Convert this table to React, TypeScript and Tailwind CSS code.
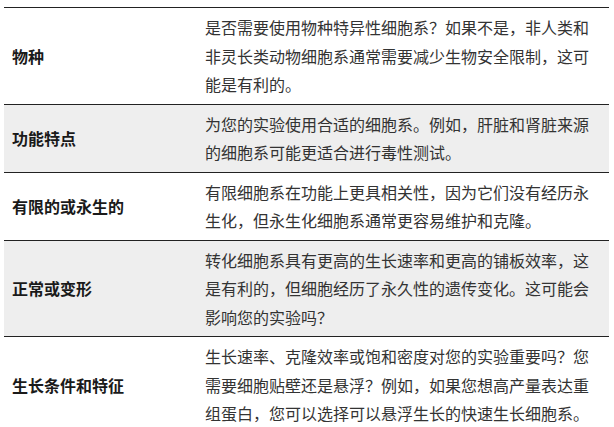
const rows = [
  {
    label: "物种",
    text: "是否需要使用物种特异性细胞系？如果不是，非人类和非灵长类动物细胞系通常需要减少生物安全限制，这可能是有利的。",
  },
  {
    label: "功能特点",
    text: "为您的实验使用合适的细胞系。例如，肝脏和肾脏来源的细胞系可能更适合进行毒性测试。",
  },
  {
    label: "有限的或永生的",
    text: "有限细胞系在功能上更具相关性，因为它们没有经历永生化，但永生化细胞系通常更容易维护和克隆。",
  },
  {
    label: "正常或变形",
    text: "转化细胞系具有更高的生长速率和更高的铺板效率，这是有利的，但细胞经历了永久性的遗传变化。这可能会影响您的实验吗？",
  },
  {
    label: "生长条件和特征",
    text: "生长速率、克隆效率或饱和密度对您的实验重要吗？您需要细胞贴壁还是悬浮？例如，如果您想高产量表达重组蛋白，您可以选择可以悬浮生长的快速生长细胞系。",
  },
];

export default function App() {
  return (
    <div className="min-h-[427px] bg-white pl-[4px] pt-[7px] font-['Noto_Sans_CJK_SC','Noto_Sans',sans-serif]">
      <table className="w-[605px] border-collapse">
        <tbody>
          {rows.map((row, i) => (
            <tr
              key={row.label}
              className={`border-t border-[#222] ${i % 2 === 1 ? "bg-[#eeeeee]" : "bg-white"}`}
            >
              <td className="w-[193px] px-[8px] py-[5px] align-middle text-[16px] font-bold leading-[28.5px] text-[#1a1a1a]">
                {row.label}
              </td>
              <td className="px-[8px] py-[5px] text-[16px] leading-[28.5px] text-[#333]">
                {row.text}
              </td>
            </tr>
          ))}
        </tbody>
      </table>
    </div>
  );
}
